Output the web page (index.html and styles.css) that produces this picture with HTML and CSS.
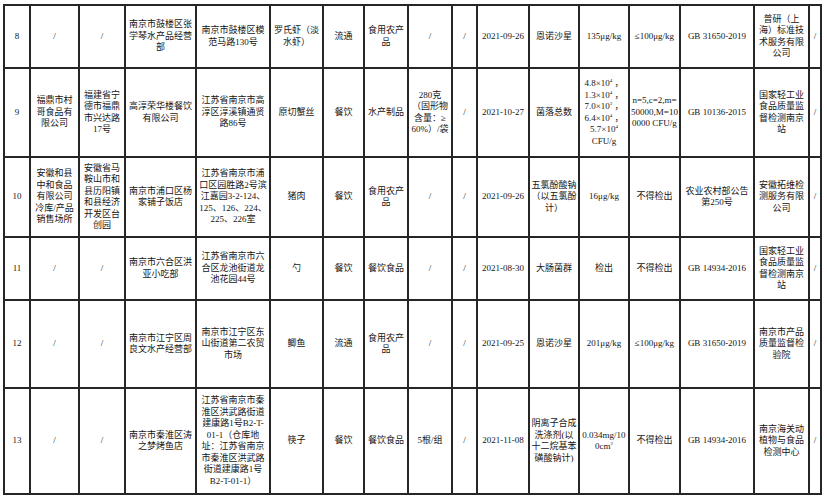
FILE: index.html
```html
<!DOCTYPE html>
<html lang="zh">
<head>
<meta charset="utf-8">
<title>抽检结果</title>
<link rel="stylesheet" href="styles.css">
</head>
<body>
<div class="page">
<div class="sheet">
  <div class="c">8</div><div class="c">/</div><div class="c">/</div>
  <div class="c">南京市鼓楼区张<br>学琴水产品经营<br>部</div>
  <div class="c">南京市鼓楼区模<br>范马路130号</div>
  <div class="c">罗氏虾（淡<br>水虾）</div>
  <div class="c">流通</div>
  <div class="c">食用农产<br>品</div>
  <div class="c">/</div><div class="c">/</div>
  <div class="c">2021-09-26</div>
  <div class="c">恩诺沙星</div>
  <div class="c">135μg/kg</div>
  <div class="c">≤100μg/kg</div>
  <div class="c">GB 31650-2019</div>
  <div class="c">普研（上<br>海）标准技<br>术服务有限<br>公司</div>
  <div class="c">/</div>

  <div class="c">9</div>
  <div class="c">福鼎市村<br>哥食品有<br>限公司</div>
  <div class="c">福建省宁<br>德市福鼎<br>市兴达路<br>17号</div>
  <div class="c">高淳荣华楼餐饮<br>有限公司</div>
  <div class="c">江苏省南京市高<br>淳区淳溪镇通贤<br>路86号</div>
  <div class="c">原切蟹丝</div>
  <div class="c">餐饮</div>
  <div class="c">水产制品</div>
  <div class="c">280克<br>（固形物<br>含量：≥<br>60%）/袋</div>
  <div class="c">/</div>
  <div class="c">2021-10-27</div>
  <div class="c">菌落总数</div>
  <div class="c"><span class="t">4.8×10<sup>4</sup> ，<br>1.3×10<sup>4</sup> ，<br>7.0×10<sup>3</sup> ，<br>6.4×10<sup>4</sup> ，<br>5.7×10<sup>4</sup><br>CFU/g</span></div>
  <div class="c">n=5,c=2,m=<br>50000,M=10<br>0000 CFU/g</div>
  <div class="c">GB 10136-2015</div>
  <div class="c">国家轻工业<br>食品质量监<br>督检测南京<br>站</div>
  <div class="c">/</div>

  <div class="c">10</div>
  <div class="c">安徽和县<br>中和食品<br>有限公司<br>冷库/产品<br>销售场所</div>
  <div class="c">安徽省马<br>鞍山市和<br>县历阳镇<br>和县经济<br>开发区台<br>创园</div>
  <div class="c">南京市浦口区杨<br>家铺子饭店</div>
  <div class="c">江苏省南京市浦<br>口区园胜路2号滨<br>江嘉园3-2-124、<br>125、126、224、<br>225、226室</div>
  <div class="c">猪肉</div>
  <div class="c">餐饮</div>
  <div class="c">食用农产<br>品</div>
  <div class="c">/</div><div class="c">/</div>
  <div class="c">2021-09-26</div>
  <div class="c">五氯酚酸钠<br>（以五氯酚<br>计）</div>
  <div class="c">16μg/kg</div>
  <div class="c">不得检出</div>
  <div class="c">农业农村部公告<br>第250号</div>
  <div class="c">安徽拓维检<br>测服务有限<br>公司</div>
  <div class="c">/</div>

  <div class="c">11</div><div class="c">/</div><div class="c">/</div>
  <div class="c">南京市六合区洪<br>亚小吃部</div>
  <div class="c">江苏省南京市六<br>合区龙池街道龙<br>池花园44号</div>
  <div class="c">勺</div>
  <div class="c">餐饮</div>
  <div class="c">餐饮食品</div>
  <div class="c">/</div><div class="c">/</div>
  <div class="c">2021-08-30</div>
  <div class="c">大肠菌群</div>
  <div class="c">检出</div>
  <div class="c">不得检出</div>
  <div class="c">GB 14934-2016</div>
  <div class="c">国家轻工业<br>食品质量监<br>督检测南京<br>站</div>
  <div class="c">/</div>

  <div class="c">12</div><div class="c">/</div><div class="c">/</div>
  <div class="c">南京市江宁区周<br>良文水产经营部</div>
  <div class="c">南京市江宁区东<br>山街道第二农贸<br>市场</div>
  <div class="c">鲫鱼</div>
  <div class="c">流通</div>
  <div class="c">食用农产<br>品</div>
  <div class="c">/</div><div class="c">/</div>
  <div class="c">2021-09-25</div>
  <div class="c">恩诺沙星</div>
  <div class="c">201μg/kg</div>
  <div class="c">≤100μg/kg</div>
  <div class="c">GB 31650-2019</div>
  <div class="c">南京市产品<br>质量监督检<br>验院</div>
  <div class="c">/</div>

  <div class="c">13</div><div class="c">/</div><div class="c">/</div>
  <div class="c">南京市秦淮区涛<br>之梦烤鱼店</div>
  <div class="c">江苏省南京市秦<br>淮区洪武路街道<br>建康路1号B2-T-<br>01-1（仓库地<br>址：江苏省南京<br>市秦淮区洪武路<br>街道建康路1号<br>B2-T-01-1）</div>
  <div class="c">筷子</div>
  <div class="c">餐饮</div>
  <div class="c">餐饮食品</div>
  <div class="c">5根/组</div>
  <div class="c">/</div>
  <div class="c">2021-11-08</div>
  <div class="c">阴离子合成<br>洗涤剂(以<br>十二烷基苯<br>磺酸钠计)</div>
  <div class="c"><span class="t">0.034mg/10<br>0cm<sup>2</sup></span></div>
  <div class="c">不得检出</div>
  <div class="c">GB 14934-2016</div>
  <div class="c">南京海关动<br>植物与食品<br>检测中心</div>
  <div class="c">/</div>
</div>
</div>
</body>
</html>
```
FILE: styles.css
```css
html, body {
  margin: 0;
  padding: 0;
  background: #ffffff;
}

.page {
  padding: 4px 0 0 3px;
}

.sheet {
  display: grid;
  width: max-content;
  grid-template-columns: 24px 47px 44px 69px 72px 51px 39px 42px 42px 23px 50px 48px 48px 49px 72px 53px 10px;
  grid-template-rows: 61px 87px 78px 61px 86px 104px;
  gap: 2px;
  padding: 2px;
  background: #262626;
  box-shadow: 0 2px 0 0 #ffffff, 0 3px 0 0 #d4d4d4;
  font-family: "Liberation Serif", "Noto Sans CJK SC", serif;
  font-size: 9px;
  line-height: 11.5px;
  color: #151515;
}

.c {
  background: #ffffff;
  display: flex;
  align-items: center;
  justify-content: center;
  text-align: center;
  white-space: nowrap;
  overflow: visible;
}

.t {
  display: block;
}

.c sup {
  font-size: 5px;
  line-height: 0;
  vertical-align: 4px;
}
```
